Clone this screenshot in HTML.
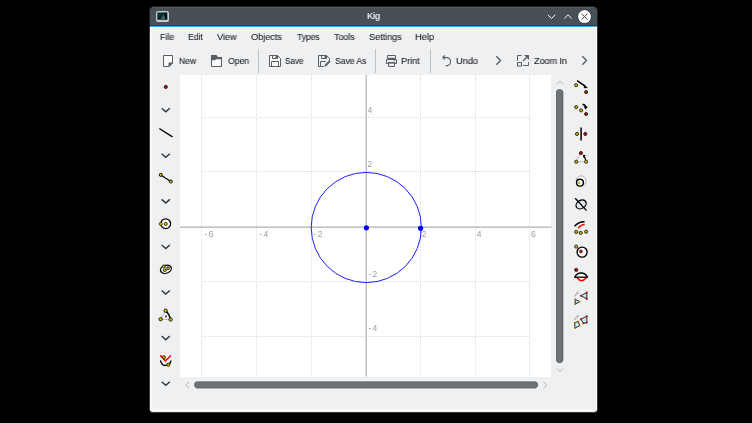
<!DOCTYPE html>
<html><head><meta charset="utf-8">
<style>
html,body{margin:0;padding:0;width:752px;height:423px;overflow:hidden;background:#000;}
body{position:relative;font-family:"Liberation Sans",sans-serif;}
.a{position:absolute;}
#win{left:150px;top:25px;width:447px;height:387px;background:#eff0f1;border-radius:0 0 3px 3px;overflow:hidden;}
#title{left:150px;top:7px;width:447px;height:18px;background:#475057;border-radius:3px 3px 0 0;}
#blue{left:150px;top:26px;width:447px;height:1px;background:#3daee9;}
.t{position:absolute;will-change:transform;transform-origin:0 0;-webkit-text-stroke:0.1px #232629;font-size:9.5px;line-height:9px;letter-spacing:-0.12px;color:#232629;white-space:nowrap;}
.tt{color:#fcfcfc;-webkit-text-stroke:0.1px #fcfcfc;}
#canvas{left:180px;top:75px;width:371px;height:302px;background:#fff;}
svg{position:absolute;left:0;top:0;}
</style></head><body>
<div class="a" style="left:149px;top:26px;width:449px;height:387px;background:rgba(160,165,170,0.35);border-radius:0 0 4px 4px;"></div>
<div class="a" style="left:152px;top:6px;width:443px;height:1px;background:rgba(71,80,87,0.35);"></div>
<div class="a" style="left:149px;top:9px;width:1px;height:17px;background:rgba(71,80,87,0.35);"></div>
<div class="a" style="left:597px;top:9px;width:1px;height:17px;background:rgba(71,80,87,0.35);"></div>
<div class="a" id="win"><div class="a" style="left:0;top:2px;width:445px;height:382px;border-left:1px solid #fcfcfc;border-right:1px solid #fcfcfc;border-bottom:2px solid #fcfcfc;border-radius:0 0 3px 3px;"></div><div class="a" style="left:1px;top:2px;width:1px;height:382px;background:#f6f7f7;"></div><div class="a" style="left:1px;top:384px;width:445px;height:1px;background:#f6f7f7;"></div></div>
<div class="a" id="title"></div>
<div class="a" style="left:153px;top:7px;width:441px;height:1px;background:#535c63;"></div>
<div class="a" id="blue"></div>
<div class="a" style="left:150px;top:25px;width:447px;height:1px;background:#35393c;"></div>
<div class="a" style="left:150px;top:27px;width:447px;height:1px;background:#fcfcfc;"></div>
<div class="t tt" style="left:367px;top:12px;font-size:9.3px;">Kig</div>

<!-- menu -->
<div class="t" style="left:160px;top:32px;transform:scaleX(0.947);">File</div>
<div class="t" style="left:188px;top:32px;transform:scaleX(0.925);">Edit</div>
<div class="t" style="left:217px;top:32px;transform:scaleX(0.975);">View</div>
<div class="t" style="left:251px;top:32px;transform:scaleX(0.98);">Objects</div>
<div class="t" style="left:297px;top:32px;transform:scaleX(0.908);">Types</div>
<div class="t" style="left:334px;top:32px;transform:scaleX(0.95);">Tools</div>
<div class="t" style="left:369px;top:32px;transform:scaleX(0.979);">Settings</div>
<div class="t" style="left:415px;top:32px;transform:scaleX(0.99);">Help</div>

<!-- toolbar -->
<div class="t" style="left:179px;top:56px;transform:scaleX(0.91);">New</div>
<div class="t" style="left:228px;top:56px;transform:scaleX(0.926);">Open</div>
<div class="t" style="left:285px;top:56px;transform:scaleX(0.871);">Save</div>
<div class="t" style="left:335px;top:56px;transform:scaleX(0.915);">Save As</div>
<div class="t" style="left:401px;top:56px;transform:scaleX(0.974);">Print</div>
<div class="t" style="left:456px;top:56px;transform:scaleX(0.982);">Undo</div>
<div class="t" style="left:534px;top:56px;transform:scaleX(0.97);">Zoom In</div>

<div class="a" id="canvas"></div>

<svg width="752" height="423" viewBox="0 0 752 423">
 <!-- title buttons -->
 <path d="M547.8 14.8 L551.5 18.5 L555.2 14.8" fill="none" stroke="#fcfcfc" stroke-width="1"/>
 <path d="M564.3 18.5 L568 14.8 L571.7 18.5" fill="none" stroke="#fcfcfc" stroke-width="1"/>
 <circle cx="584.5" cy="16.6" r="6.5" fill="#fcfcfc"/>
 <circle cx="584.5" cy="16.6" r="7.2" fill="none" stroke="#3a4248" stroke-width="0.8"/><path d="M581.6 13.7 L587.4 19.5 M587.4 13.7 L581.6 19.5" stroke="#3d454b" stroke-width="1"/>
 <!-- app icon -->
 <defs><linearGradient id="ig" x1="0" y1="0" x2="1" y2="1"><stop offset="0" stop-color="#0f4448"/><stop offset="0.6" stop-color="#06171a"/><stop offset="1" stop-color="#000"/></linearGradient>
 <clipPath id="cc"><rect x="180" y="75" width="371.5" height="301.7"/></clipPath></defs>
 <rect x="156" y="11" width="13" height="11" rx="2" fill="#c9cacb"/>
 <rect x="157.3" y="12.4" width="10" height="7.3" fill="url(#ig)"/>
 <path d="M163.4 14 L160.6 18.9 L165.4 18.9 Z" fill="#33676b"/>
 <!-- toolbar icons -->
 <g fill="none" stroke="#31363b" stroke-width="1" opacity="0.78">
  <path d="M163.5 55.5 H172.5 V63 L169 66.5 H163.5 Z" fill="#fcfcfc"/>
  <path d="M169 63 H172.5 L169 66.5 Z" fill="#31363b"/>
  <path d="M211.5 59.5 V66.5 H221.5 V58.5 H216 L214.8 59.5 Z" fill="#fcfcfc"/>
  <path d="M211 55 H216.5 L218 57 H222 V59.2 H215.8 L214.6 60.2 H211 Z" fill="#31363b" stroke="none"/>
  <path d="M269.5 55.5 H277.5 L280.5 58.5 V66.5 H269.5 Z" fill="#fcfcfc"/>
  <path d="M272.5 55.5 V58.5 H277.5 V55.5"/>
  <rect x="275.5" y="56" width="2" height="2.5" fill="#31363b" stroke="none"/>
  <path d="M271.5 66.5 V61.5 H278.5 V66.5"/>
  <path d="M318.5 55.5 H326.5 L329.5 58.5 V60.5 M318.5 55.5 V66.5 H324" fill="none"/>
  <path d="M321.5 55.5 V58.5 H326.5 V55.5"/>
  <rect x="324.5" y="56" width="2" height="2.5" fill="#31363b" stroke="none"/>
  <path d="M320.5 66.5 V61.5 H325.5"/>
  <path d="M325 66 L330 61" stroke-width="2"/>
  <path d="M387.5 58.5 V55.5 H395.5 V58.5" />
  <rect x="387.5" y="57.8" width="8" height="1.2" fill="#31363b" stroke="none"/>
  <path d="M388.5 63.5 H386.5 V59.5 H396.5 V63.5 H394.5"/>
  <rect x="388" y="62" width="7" height="1.6" fill="#31363b" stroke="none"/>
  <path d="M388.5 62 L388.5 66.5 H394.5 V62"/>
  <circle cx="394.3" cy="60.6" r="0.6" fill="#31363b" stroke="none"/>
  <path d="M444.8 55.3 L442.8 57.4 L444.8 59.5" stroke-width="1.1"/>
  <path d="M443 57.4 C447.5 57 450.6 58.3 450.6 61.6 C450.6 64.6 448 66 445.6 66" stroke-width="1.1"/>
  <path d="M521.7 55.5 H517.5 V60.7" />
  <rect x="517.5" y="62.5" width="4" height="3.5"/>
  <path d="M523 65.5 H528.5 V62.2"/>
  <path d="M523.2 60.8 L526.8 57.2" stroke-width="1.3"/>
  <path d="M524 55 H529 V60 Z" fill="#31363b" stroke="none"/>
  <path d="M496.3 56.3 L500.5 60.5 L496.3 64.7" stroke-width="1.4"/>
  <path d="M582.3 56.3 L586.5 60.5 L582.3 64.7" stroke-width="1.4"/>
 </g>
 <!-- left toolbar -->
 <path d="M161.7 108.20 L165.75 111.80 L169.8 108.20" fill="none" stroke="#31363b" stroke-width="1.4"/><path d="M161.7 153.78 L165.75 157.38 L169.8 153.78" fill="none" stroke="#31363b" stroke-width="1.4"/><path d="M161.7 199.36 L165.75 202.96 L169.8 199.36" fill="none" stroke="#31363b" stroke-width="1.4"/><path d="M161.7 244.94 L165.75 248.54 L169.8 244.94" fill="none" stroke="#31363b" stroke-width="1.4"/><path d="M161.7 290.52 L165.75 294.12 L169.8 290.52" fill="none" stroke="#31363b" stroke-width="1.4"/><path d="M161.7 336.10 L165.75 339.70 L169.8 336.10" fill="none" stroke="#31363b" stroke-width="1.4"/><path d="M161.7 381.68 L165.75 385.28 L169.8 381.68" fill="none" stroke="#31363b" stroke-width="1.4"/>
 <circle cx="165.8" cy="86.9" r="1.6" fill="#b8160a" stroke="#2a0a08" stroke-width="0.9"/>
 <path d="M159.3 128.5 L172.5 136.9" stroke="#000" stroke-width="1.35"/>
 <path d="M160.8 174.9 L170.8 181.5" stroke="#000" stroke-width="1.15"/>
 <circle cx="160.8" cy="174.9" r="1.55" fill="#d2bc00" stroke="#000" stroke-width="0.9"/>
 <circle cx="170.8" cy="181.5" r="1.55" fill="#d2bc00" stroke="#000" stroke-width="0.9"/>
 <circle cx="165.7" cy="223.7" r="4.9" fill="#fff" stroke="#000" stroke-width="1.3"/>
 <circle cx="160.8" cy="223.9" r="1.6" fill="#d2bc00" stroke="#111" stroke-width="0.7"/>
 <circle cx="165.8" cy="223.9" r="1.6" fill="#d2bc00" stroke="#111" stroke-width="0.7"/>
 <ellipse cx="165.9" cy="269.3" rx="5.6" ry="3.9" transform="rotate(-18 165.9 269.2)" fill="#f4f4f6" stroke="#000" stroke-width="1.3"/>
 <path d="M165 266 L167 271" stroke="#b8bcc8" stroke-width="1"/>
 <circle cx="163.8" cy="266.3" r="1.4" fill="#d2bc00" stroke="#111" stroke-width="0.8"/>
 <circle cx="168" cy="268.2" r="1.4" fill="#d2bc00" stroke="#111" stroke-width="0.8"/>
 <circle cx="164.7" cy="270.2" r="1.4" fill="#d2bc00" stroke="#111" stroke-width="0.8"/>
 <path d="M165.7 310.7 L160.7 319.2 L170.6 319.5 Z" fill="#fff" stroke="#9aa0a6" stroke-width="0.8"/>
 <path d="M165.7 310.7 Q169.5 314 170.6 319.5" fill="none" stroke="#000" stroke-width="1.3"/>
 <path d="M165.2 315.5 L166.8 315.6 L166.6 317.5 L165.3 317.3 Z" fill="#000"/>
 <circle cx="165.7" cy="310.7" r="1.7" fill="#d2bc00" stroke="#000" stroke-width="0.8"/>
 <circle cx="160.7" cy="319.2" r="1.7" fill="#d2bc00" stroke="#000" stroke-width="0.8"/>
 <circle cx="170.6" cy="319.5" r="1.7" fill="#d2bc00" stroke="#000" stroke-width="0.8"/>
 <path d="M160.2 355.2 L165.4 360.9 L170.9 355.5" fill="none" stroke="#f00" stroke-width="1.5"/>
 <path d="M160.4 360.4 Q162 366 165.5 365.4 Q170 365.5 171.1 360.7" fill="none" stroke="#000" stroke-width="1.4"/>
 <circle cx="163.8" cy="357.3" r="1.6" fill="#d2bc00" stroke="#000" stroke-width="0.8"/>
 <circle cx="168.3" cy="364.7" r="1.6" fill="#d2bc00" stroke="#000" stroke-width="0.8"/>
 <!-- scrollbars -->
 <path d="M557 84 L560 81 L563 84" fill="none" stroke="#b0b3b6" stroke-width="1"/>
 <path d="M557 368.6 L560 371.6 L563 368.6" fill="none" stroke="#b0b3b6" stroke-width="1"/>
 <rect x="555.2" y="88" width="9" height="276" rx="4.5" fill="#f8f8f9"/><rect x="556" y="88.9" width="7.2" height="274.3" rx="3.6" fill="#6e7378"/><rect x="562.2" y="91" width="1" height="270" fill="#5d6267"/><rect x="556.1" y="91" width="0.9" height="270" fill="#62676c"/>
 <path d="M189 382 L185.8 385 L189 388" fill="none" stroke="#b0b3b6" stroke-width="1"/>
 <path d="M543.6 382 L546.8 385 L543.6 388" fill="none" stroke="#b0b3b6" stroke-width="1"/>
 <rect x="193.2" y="380.6" width="346" height="8.6" rx="4.3" fill="#f8f8f9"/><rect x="194" y="381.4" width="344.2" height="6.9" rx="3.45" fill="#6e7378"/><rect x="196" y="387.3" width="340" height="1" fill="#5d6267"/><rect x="196" y="381.6" width="340" height="0.9" fill="#62676c"/>
 <!-- right toolbar -->
 <path d="M577.1 80.7 L585.5 86.3" stroke="#000" stroke-width="1.5"/>
 <path d="M584 84.8 L588 87.9 L583.8 88.2 Z" fill="#000"/>
 <circle cx="576.1" cy="85.2" r="1.55" fill="#d2bc00" stroke="#111" stroke-width="0.85"/>
 <circle cx="586.1" cy="92.1" r="1.55" fill="#c41408" stroke="#111" stroke-width="0.85"/>
 <circle cx="576.2" cy="107.1" r="1.55" fill="#d2bc00" stroke="#111" stroke-width="0.85"/>
 <circle cx="581.1" cy="110.4" r="1.55" fill="#d2bc00" stroke="#111" stroke-width="0.85"/>
 <circle cx="586.1" cy="114" r="1.55" fill="#c41408" stroke="#111" stroke-width="0.85"/>
 <path d="M582.6 104.2 Q585.6 104.8 585.8 107.4" fill="none" stroke="#000" stroke-width="1.4"/>
 <path d="M583.6 106.6 L588 106.4 L585.6 109.4 Z" fill="#000"/>
 <path d="M581.1 127.6 L581.1 140.6" stroke="#000" stroke-width="1.5"/>
 <circle cx="577" cy="133.9" r="1.55" fill="#d2bc00" stroke="#111" stroke-width="0.85"/>
 <circle cx="585.3" cy="133.9" r="1.55" fill="#c41408" stroke="#111" stroke-width="0.85"/>
 <path d="M580.9 153 L576.2 161.7 L586.1 161.7" fill="#fafafa" stroke="#a0a4a8" stroke-width="0.8"/>
 <path d="M583.6 156.2 Q585.4 157.8 585.6 160" fill="none" stroke="#000" stroke-width="1.4"/>
 <path d="M582.8 154.8 L585.8 155.2 L583.6 157.8 Z" fill="#000"/>
 <circle cx="580.9" cy="153" r="1.55" fill="#c41408" stroke="#111" stroke-width="0.85"/>
 <circle cx="576.2" cy="161.7" r="1.55" fill="#d2bc00" stroke="#111" stroke-width="0.85"/>
 <circle cx="586.1" cy="161.7" r="1.55" fill="#d2bc00" stroke="#111" stroke-width="0.85"/>
 <circle cx="581.1" cy="180.8" r="4.9" fill="#fff" stroke="#9fa3a8" stroke-width="0.9"/>
 <circle cx="580" cy="182.7" r="3.4" fill="#fff" stroke="#000" stroke-width="1.4"/>
 <circle cx="579.2" cy="183.1" r="1.4" fill="#d2bc00"/>
 <ellipse cx="581.1" cy="204.4" rx="5.4" ry="4" transform="rotate(-32 581.1 204.4)" fill="#e4e8ee" stroke="#000" stroke-width="1.3"/>
 <path d="M575.2 198.3 L586.6 210.6" stroke="#000" stroke-width="1.3"/>
 <path d="M574.5 226.2 Q578.5 221.6 584.6 221.7" fill="none" stroke="#000" stroke-width="1.5"/>
 <path d="M578.3 228.4 Q580.5 224.8 584.7 224.6" fill="none" stroke="#f00" stroke-width="1.5"/>
 <circle cx="576.2" cy="231.9" r="1.55" fill="#d2bc00" stroke="#111" stroke-width="0.85"/>
 <circle cx="580.7" cy="232.9" r="1.55" fill="#d2bc00" stroke="#111" stroke-width="0.85"/>
 <circle cx="586.1" cy="231.7" r="1.55" fill="#d2bc00" stroke="#111" stroke-width="0.85"/>
 <circle cx="582.1" cy="252.1" r="5" fill="#fff" stroke="#000" stroke-width="1.4"/>
 <circle cx="576.1" cy="246.6" r="1.55" fill="#d2bc00" stroke="#111" stroke-width="0.85"/>
 <circle cx="580.9" cy="251.4" r="1.5" fill="#c41408" stroke="#111" stroke-width="0.6"/>
 <circle cx="576.2" cy="269.9" r="1.6" fill="#c41408" stroke="#111" stroke-width="0.8"/>
 <path d="M576.9 277.5 Q581.5 284 586.4 277.5" fill="#f4f8fa" stroke="#f00" stroke-width="1.4"/>
 <path d="M575 277.2 Q576.5 273 581.1 273 Q585.7 273 587.3 277.2" fill="#fafafa" stroke="#000" stroke-width="1.4"/>
 <path d="M574 277.2 L588 277.2" stroke="#000" stroke-width="1.3"/>
 <path d="M574.8 296.5 Q575.8 293.8 577.6 292.9" fill="none" stroke="#b4b6ba" stroke-width="1.5"/><path d="M576.6 291.6 L579.4 291.9 L577.9 294.2 Z" fill="#b4b6ba"/>
 <path d="M575.2 299.3 L579.7 301.6 L575.2 304.2 Z" fill="#d6e6f8" stroke="#222" stroke-width="1.0"/>
 <path d="M580.9 295.7 L586.8 292.6 L586.8 299 Z" fill="#d6e6f8" stroke="#222" stroke-width="1.0"/>
 <circle cx="575.2" cy="299.3" r="0.95" fill="#a08c00"/>
 <circle cx="579.7" cy="301.6" r="0.95" fill="#a08c00"/>
 <circle cx="575.2" cy="304.2" r="0.95" fill="#a08c00"/>
 <circle cx="580.9" cy="295.7" r="1.05" fill="#a81810"/>
 <circle cx="586.8" cy="292.6" r="1.05" fill="#a81810"/>
 <circle cx="586.8" cy="299" r="1.05" fill="#a81810"/>
 <path d="M574.8 319.9 Q575.8 317.2 577.6 316.3" fill="none" stroke="#b4b6ba" stroke-width="1.5"/><path d="M576.6 315 L579.4 315.3 L577.9 317.6 Z" fill="#b4b6ba"/>
 <path d="M574.7 322.8 L578.3 321.4 L579.7 325.6 L575 328 Z" fill="#d6e6f8" stroke="#222" stroke-width="1.0"/>
 <path d="M580.9 319.2 L586.8 316.2 L586.8 322.6 L583.5 323.3 Z" fill="#d6e6f8" stroke="#222" stroke-width="1.0"/>
 <circle cx="574.7" cy="322.8" r="0.95" fill="#a08c00"/>
 <circle cx="578.3" cy="321.4" r="0.95" fill="#a08c00"/>
 <circle cx="579.7" cy="325.6" r="0.95" fill="#a08c00"/>
 <circle cx="575" cy="328" r="0.95" fill="#a08c00"/>
 <circle cx="580.9" cy="319.2" r="1.05" fill="#a81810"/>
 <circle cx="586.8" cy="316.2" r="1.05" fill="#a81810"/>
 <circle cx="586.8" cy="322.6" r="1.05" fill="#a81810"/>
 <circle cx="583.5" cy="323.3" r="1.05" fill="#a81810"/>
 <!-- toolbar separators -->
 <rect x="258" y="49" width="1" height="24" fill="#bfc2c4"/>
 <rect x="375" y="49" width="1" height="24" fill="#bfc2c4"/>
 <rect x="430" y="49" width="1" height="24" fill="#bfc2c4"/>

 <!-- canvas content -->
 <g clip-path="url(#cc)">
 <line x1="201.5" y1="75" x2="201.5" y2="377" stroke="#dcdcdc" stroke-width="1" stroke-dasharray="1 1" shape-rendering="crispEdges"/>
 <line x1="256.5" y1="75" x2="256.5" y2="377" stroke="#dcdcdc" stroke-width="1" stroke-dasharray="1 1" shape-rendering="crispEdges"/>
 <line x1="311.5" y1="75" x2="311.5" y2="377" stroke="#dcdcdc" stroke-width="1" stroke-dasharray="1 1" shape-rendering="crispEdges"/>
 <line x1="420.5" y1="75" x2="420.5" y2="377" stroke="#dcdcdc" stroke-width="1" stroke-dasharray="1 1" shape-rendering="crispEdges"/>
 <line x1="475.5" y1="75" x2="475.5" y2="377" stroke="#dcdcdc" stroke-width="1" stroke-dasharray="1 1" shape-rendering="crispEdges"/>
 <line x1="529.5" y1="75" x2="529.5" y2="377" stroke="#dcdcdc" stroke-width="1" stroke-dasharray="1 1" shape-rendering="crispEdges"/>
 <line x1="202" y1="117.5" x2="530" y2="117.5" stroke="#dcdcdc" stroke-width="1" stroke-dasharray="1 1" shape-rendering="crispEdges"/>
 <line x1="202" y1="171.5" x2="530" y2="171.5" stroke="#dcdcdc" stroke-width="1" stroke-dasharray="1 1" shape-rendering="crispEdges"/>
 <line x1="202" y1="281.5" x2="530" y2="281.5" stroke="#dcdcdc" stroke-width="1" stroke-dasharray="1 1" shape-rendering="crispEdges"/>
 <line x1="202" y1="336.5" x2="530" y2="336.5" stroke="#dcdcdc" stroke-width="1" stroke-dasharray="1 1" shape-rendering="crispEdges"/>
 <line x1="366.2" y1="75" x2="366.2" y2="377" stroke="#b0b0b3" stroke-width="1.2"/>
 <line x1="180" y1="227.2" x2="552" y2="227.2" stroke="#b0b0b3" stroke-width="1.2"/>
 <g font-family="Liberation Sans" font-size="8.5" fill="#9c9c9c">
 <text x="204.6" y="237" letter-spacing="1.3">-6</text><text x="259.3" y="237" letter-spacing="1.3">-4</text><text x="313.6" y="237" letter-spacing="1.3">-2</text>
 <text x="421.8" y="237">2</text><text x="476.8" y="237">4</text><text x="531.1" y="237">6</text>
 <text x="367.6" y="112.5">4</text><text x="367.4" y="167.3">2</text>
 <text x="368.6" y="277" letter-spacing="1.1">-2</text><text x="368.6" y="331.3" letter-spacing="1.1">-4</text>
 </g>
 <circle cx="366.3" cy="227.5" r="55.1" fill="none" stroke="#1010ff" stroke-width="0.95"/>
 <circle cx="366.4" cy="227.8" r="2.6" fill="#0000ff"/>
 <circle cx="420.6" cy="228.3" r="2.6" fill="#0000ff"/>
 </g>
</svg>
</body></html>
